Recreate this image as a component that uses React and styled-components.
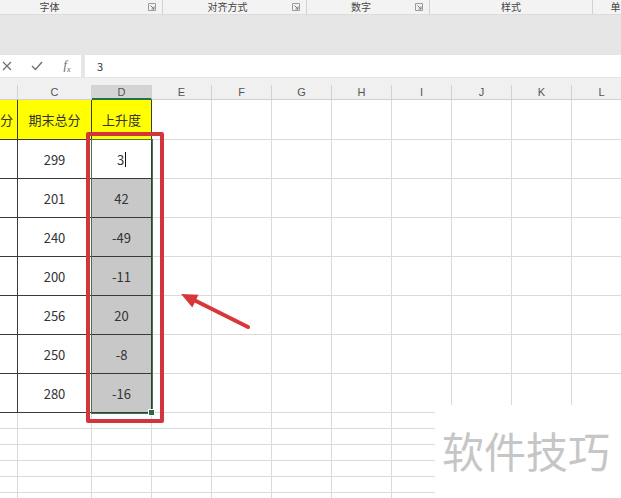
import React from 'react';
import styled, { createGlobalStyle } from 'styled-components';

const GlobalStyle = createGlobalStyle`
  html, body {
    margin: 0;
    padding: 0;
    background: #ffffff;
  }
  body {
    font-family: "Noto Sans CJK SC", "Noto Sans", sans-serif;
  }
`;

const groups = [
  { label: '字体', width: 212, launcher: true, offset: -49 },
  { label: '对齐方式', width: 144, launcher: true },
  { label: '数字', width: 123, launcher: true },
  { label: '样式', width: 163, launcher: false },
  { label: '单', width: 46, launcher: false },
];

// B is only a sliver at the left edge, its letter is off screen
const columns = [
  { id: 'B', width: 18, label: '' },
  { id: 'C', width: 74 },
  { id: 'D', width: 60 },
  { id: 'E', width: 60 },
  { id: 'F', width: 60 },
  { id: 'G', width: 60 },
  { id: 'H', width: 60 },
  { id: 'I', width: 60 },
  { id: 'J', width: 60 },
  { id: 'K', width: 60 },
  { id: 'L', width: 60 },
];

const totals = ['299', '201', '240', '200', '256', '250', '280'];
const rises = ['3', '42', '-49', '-11', '20', '-8', '-16'];

const Launcher = () => (
  <svg width="8" height="8" viewBox="0 0 8 8">
    <path d="M0.5 0.5 H7.5 V7.5 H0.5 Z" fill="none" stroke="#9a9a9a" strokeWidth="1" />
    <path d="M2.5 2.5 L6 6 M6 3.5 V6 H3.5" fill="none" stroke="#7a7a7a" strokeWidth="1" />
  </svg>
);

const App = () => {
  const bodyRows = [];
  // row 1: yellow titles
  bodyRows.push(
    columns.map((col) => {
      if (col.id === 'B')
        return (
          <Cell key={col.id} $kind="title" $align="end">
            分
          </Cell>
        );
      if (col.id === 'C') return <Cell key={col.id} $kind="title">期末总分</Cell>;
      if (col.id === 'D') return <Cell key={col.id} $kind="title">上升度</Cell>;
      return <Cell key={col.id} $kind="empty" />;
    })
  );
  totals.forEach((total, i) => {
    bodyRows.push(
      columns.map((col) => {
        if (col.id === 'B') return <Cell key={col.id} $kind="data" />;
        if (col.id === 'C') return <Cell key={col.id} $kind="data">{total}</Cell>;
        if (col.id === 'D')
          return (
            <Cell key={col.id} $kind={i === 0 ? 'data' : 'sel'}>
              {rises[i]}
              {i === 0 && <Caret />}
            </Cell>
          );
        return <Cell key={col.id} $kind="empty" />;
      })
    );
  });
  for (let r = 0; r < 6; r++) {
    bodyRows.push(columns.map((col) => <Cell key={col.id} $kind="empty" />));
  }

  return (
    <Page>
      <GlobalStyle />
      <RibbonLabels>
        {groups.map((g, i) => (
          <Group key={i} style={{ width: g.width, marginLeft: g.offset || 0 }}>
            <GroupLabel>{g.label}</GroupLabel>
            {g.launcher && (
              <LauncherBox>
                <Launcher />
              </LauncherBox>
            )}
          </Group>
        ))}
      </RibbonLabels>
      <RibbonBody />
      <FormulaBar>
        <IconBox>
          <FxIcon>
            <svg width="10" height="10" viewBox="0 0 10 10">
              <path d="M1 1 L9 9 M9 1 L1 9" fill="none" stroke="#6f6f6f" strokeWidth="1.2" />
            </svg>
          </FxIcon>
          <FxIcon>
            <svg width="12" height="10" viewBox="0 0 12 10">
              <path d="M1 5 L4.5 8.5 L11 1" fill="none" stroke="#6f6f6f" strokeWidth="1.4" />
            </svg>
          </FxIcon>
          <FxLabel>
            f<sub>x</sub>
          </FxLabel>
        </IconBox>
        <Input>3</Input>
      </FormulaBar>
      <HeaderStrip />
      <Sheet>
        <HeaderRow>
          {columns.map((col) => (
            <ColHead key={col.id} $active={col.id === 'D'} style={{ width: col.width }}>
              {col.label ?? col.id}
            </ColHead>
          ))}
        </HeaderRow>
        <Grid>
          {bodyRows.map((cells, r) => (
            <Row key={r} $h={r === 0 ? 40 : r < 8 ? 39 : 16}>
              {cells.map((cell, c) =>
                React.cloneElement(cell, { style: { width: columns[c].width } })
              )}
            </Row>
          ))}
        </Grid>
        <Selection>
          <Handle />
        </Selection>
      </Sheet>

      <RedBox />
      <Arrow width="90" height="50" viewBox="0 0 90 50">
        <line x1="78" y1="42" x2="22" y2="14" stroke="#d7363b" strokeWidth="4" strokeLinecap="round" />
        <polygon points="11,9 22.3,22.4 28.5,9.8" fill="#d7363b" />
      </Arrow>
      <Watermark>软件技巧</Watermark>
    </Page>
  );
};

const Page = styled.div`
  position: relative;
  width: 621px;
  height: 498px;
  overflow: hidden;
  display: flex;
  flex-direction: column;
  background: #ffffff;
`;

const RibbonLabels = styled.div`
  height: 15px;
  display: flex;
  background: #f3f3f3;
  border-bottom: 1px solid #dcdcdc;
  box-sizing: border-box;
  flex-shrink: 0;
`;

const Group = styled.div`
  flex-shrink: 0;
  display: flex;
  align-items: center;
  height: 100%;
  border-right: 1px solid #d2d2d2;
  box-sizing: border-box;
`;

const GroupLabel = styled.div`
  flex: 1;
  text-align: center;
  font-size: 10px;
  line-height: 14px;
  color: #444;
  white-space: nowrap;
`;

const LauncherBox = styled.div`
  width: 14px;
  display: flex;
  align-items: center;
  justify-content: flex-start;
`;

const RibbonBody = styled.div`
  height: 38px;
  background: #e6e6e6;
  flex-shrink: 0;
`;

const FormulaBar = styled.div`
  height: 25px;
  box-sizing: border-box;
  padding: 2px 0 1px;
  background: #e6e6e6;
  display: flex;
  gap: 4px;
  flex-shrink: 0;
`;

const IconBox = styled.div`
  width: 81px;
  background: #ffffff;
  display: flex;
  align-items: center;
  gap: 18px;
  padding-left: 1px;
  box-sizing: border-box;
`;

const FxIcon = styled.div`
  width: 12px;
  display: flex;
  justify-content: center;
`;

const FxLabel = styled.div`
  width: 12px;
  text-align: center;
  font-family: "Liberation Serif", serif;
  font-style: italic;
  font-size: 12px;
  color: #666;
  sub {
    font-size: 8px;
  }
`;

const Input = styled.div`
  flex: 1;
  background: #ffffff;
  font-size: 11px;
  color: #333;
  line-height: 22px;
  padding-left: 12px;
`;

const HeaderStrip = styled.div`
  height: 7px;
  background: #f0f0f0;
  flex-shrink: 0;
`;

const Sheet = styled.div`
  position: relative;
  flex: 1;
`;

const HeaderRow = styled.div`
  display: flex;
  height: 15px;
  background: #f0f0f0;
  border-bottom: 1px solid #d0d0d0;
  box-sizing: border-box;
`;

const ColHead = styled.div`
  flex-shrink: 0;
  box-sizing: border-box;
  border-right: 1px solid #d2d2d2;
  text-align: center;
  font-family: "Liberation Sans", sans-serif;
  font-size: 11px;
  line-height: 14px;
  color: #555;
  background: ${(p) => (p.$active ? '#d4d4d4' : 'transparent')};
  border-bottom: ${(p) => (p.$active ? '2px solid #217346' : 'none')};
  margin-bottom: ${(p) => (p.$active ? '-1px' : '0')};
`;

const Grid = styled.div`
  display: flex;
  flex-direction: column;
`;

const Row = styled.div`
  display: flex;
  height: ${(p) => p.$h}px;
  flex-shrink: 0;
`;

const cellBg = { title: '#ffff00', data: '#ffffff', sel: '#c8c8c8', empty: '#ffffff' };

const Cell = styled.div`
  flex-shrink: 0;
  box-sizing: border-box;
  display: flex;
  align-items: center;
  justify-content: ${(p) => (p.$align === 'end' ? 'flex-end' : 'center')};
  padding-right: ${(p) => (p.$align === 'end' ? '4px' : '0')};
  overflow: hidden;
  white-space: nowrap;
  background: ${(p) => cellBg[p.$kind]};
  border-right: 1px solid ${(p) => (p.$kind === 'empty' ? '#dadada' : '#3a3a3a')};
  border-bottom: 1px solid ${(p) => (p.$kind === 'empty' ? '#dadada' : '#3a3a3a')};
  font-size: 13px;
  color: #333;
  font-family: "Noto Sans CJK SC", "Noto Sans", sans-serif;
`;

const Caret = styled.span`
  display: inline-block;
  width: 1px;
  height: 15px;
  background: #111;
  margin-left: 1px;
`;

const Selection = styled.div`
  position: absolute;
  left: 91px;
  top: 54px;
  width: 62px;
  height: 275px;
  box-sizing: border-box;
  border: 1px solid #3b7a51;
  pointer-events: none;
`;

const Handle = styled.div`
  position: absolute;
  right: -3px;
  bottom: -3px;
  width: 5px;
  height: 5px;
  background: #2b6a43;
  border: 1px solid #ffffff;
`;

const RedBox = styled.div`
  position: absolute;
  left: 86px;
  top: 132px;
  width: 78px;
  height: 291px;
  box-sizing: border-box;
  border: 4px solid #d2363c;
  border-radius: 2px;
`;

const Arrow = styled.svg`
  position: absolute;
  left: 170px;
  top: 285px;
`;

const Watermark = styled.div`
  position: absolute;
  left: 435px;
  top: 405px;
  right: 0;
  bottom: 0;
  background: #ffffff;
  padding: 20px 0 0 7px;
  font-size: 42px;
  line-height: 50px;
  color: #c6c6c6;
  white-space: nowrap;
`;

export default App;
